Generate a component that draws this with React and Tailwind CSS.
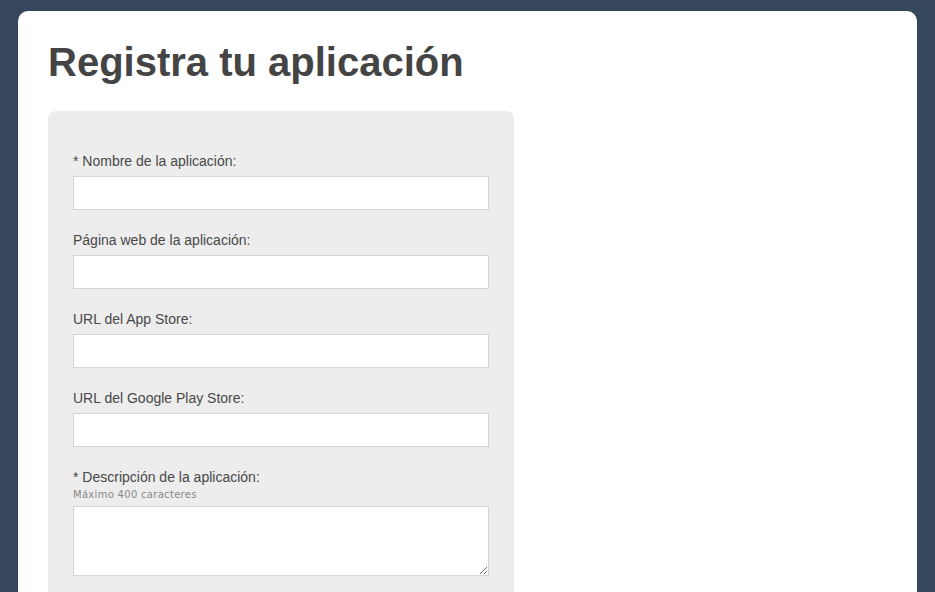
export default function App() {
  const fields = [
    'Nombre de la aplicación:',
    'Página web de la aplicación:',
    'URL del App Store:',
    'URL del Google Play Store:',
  ];
  const required = [true, false, false, false];

  return (
    <div className="min-h-screen bg-[#36465d] pt-[11px] pl-[18px] pr-[18px] font-['Liberation_Sans',Arial,sans-serif]">
      <div className="bg-white rounded-t-[10px] h-[581px] pl-[30px] pt-[27px] overflow-hidden">
        <h1 className="text-[40px] leading-[48px] font-bold text-[#444]">
          Registra tu aplicación
        </h1>
        <div className="mt-[25px] w-[466px] bg-[#ededed] rounded-t-[8px] px-[25px] pt-[41px] pb-[30px]">
          {fields.map((label, i) => (
            <div key={label} className="mb-[21px]">
              <label className="block text-[14px] leading-[18px] text-[#484848] mb-[6px]">
                {required[i] ? '* ' : ''}
                {label}
              </label>
              <input
                type="text"
                className="block w-full h-[34px] bg-white border border-[#d4d4d4] outline-none"
              />
            </div>
          ))}
          <div>
            <label className="block text-[14px] leading-[18px] text-[#484848]">
              * Descripción de la aplicación:
            </label>
            <div className="mt-[2px] text-[10px] leading-[14px] text-[#888] font-['DejaVu_Sans',sans-serif] mb-[4px] tracking-[0.3px]">
              Máximo 400 caracteres
            </div>
            <textarea className="block w-full h-[70px] bg-white border border-[#d4d4d4] outline-none resize-y" />
          </div>
        </div>
      </div>
    </div>
  );
}
